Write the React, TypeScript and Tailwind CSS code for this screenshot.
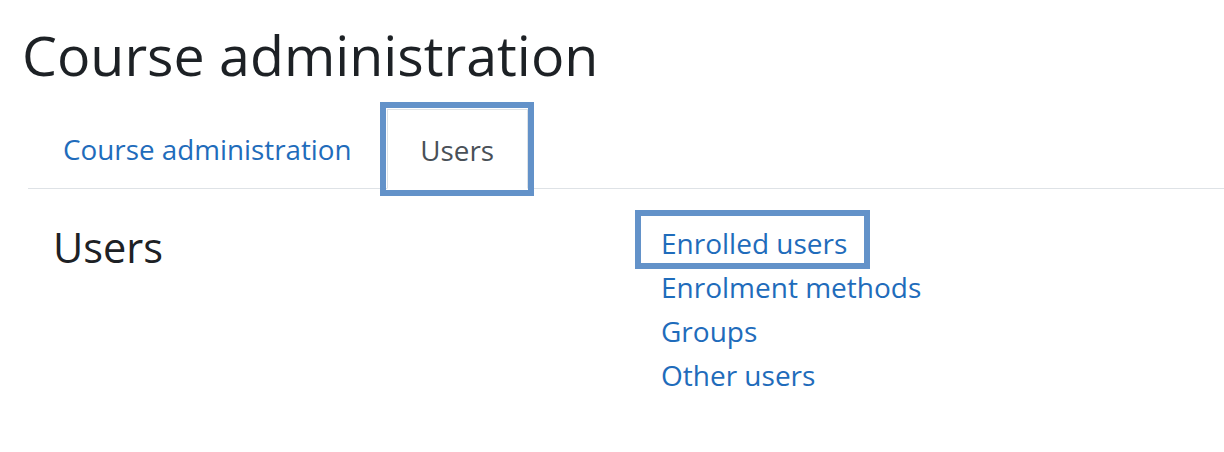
import React from "react";

export default function App() {
  return (
    <div className="w-[1224px] h-[452px] bg-white overflow-hidden text-[#1d2125]" style={{ fontFamily: '"Open Sans", "Noto Sans", sans-serif' }}>
      <h1 className="pl-[22px] pt-[22px] text-[55.5px] leading-[1.2] font-normal text-[#1d2125]">Course administration</h1>
      <div className="ml-[28px] mt-[14px] flex border-b border-[#dee2e6] h-[86px] items-end">
        <a className="pl-[35px] pr-[35px] h-[80px] flex items-center pt-[4px] text-[27.8px] text-[#1f6cbb]">Course administration</a>
        <div className="relative">
          <span className="absolute -left-[7px] -right-[6px] -top-[7px] -bottom-[8px] border-[6px] border-[#6392c9] z-10" />
          <div className="h-[80px] w-[141px] mb-[-1px] pt-[4px] bg-white border border-b-white border-[#dee2e6] flex items-center justify-center text-[27.8px] text-[#495057]">Users</div>
        </div>
      </div>
      <div className="flex pt-[32px] pl-[53px]">
        <div className="w-[608px] text-[41.5px] leading-[52px]">Users</div>
        <div className="flex flex-col text-[28px] leading-[44px] text-[#1f6cbb]">
          <div className="relative self-start">
            <span className="absolute -left-[26px] w-[235px] -top-[11px] -bottom-[4px] border-[6px] border-[#6392c9]" />
            <a>Enrolled users</a>
          </div>
          <a>Enrolment methods</a>
          <a>Groups</a>
          <a>Other users</a>
        </div>
      </div>
    </div>
  );
}
